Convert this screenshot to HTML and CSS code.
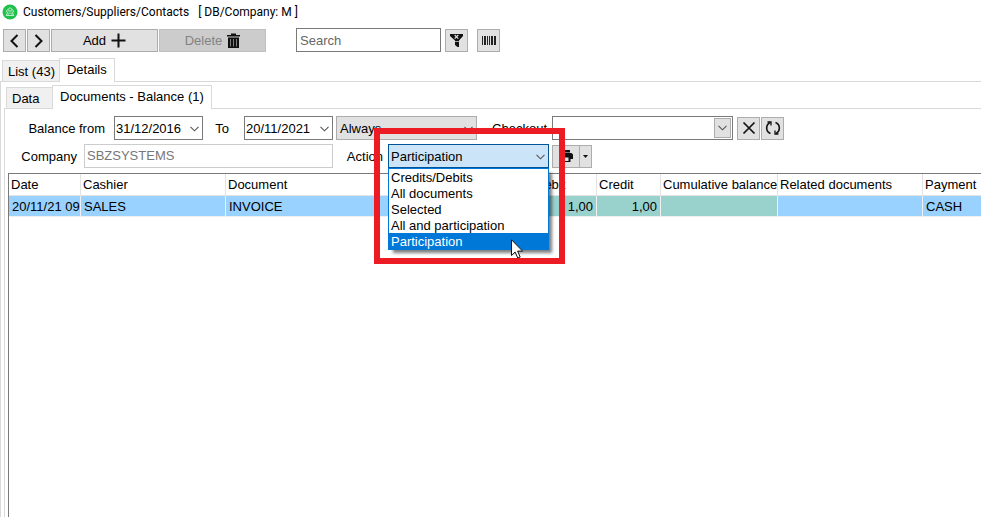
FILE: index.html
```html
<!DOCTYPE html>
<html lang="en">
<head>
<meta charset="utf-8">
<title>Customers/Suppliers/Contacts</title>
<link rel="stylesheet" href="styles.css">
</head>

<body>
<svg class="defs" aria-hidden="true">
	<symbol id="down" viewBox="0 0 9 6"><path d="M.5 .8l4 4 4-4" fill="none" stroke="#555" stroke-width="1.1"/></symbol>
</svg>
<div id="main">
	<div id="titleBar">
		<svg class="logo" width="16" height="16" viewBox="0 0 16 16">
			<circle cx="8" cy="8" r="7.5" fill="#1fc04b"/>
			<g fill="none" stroke="#c9f3d4" stroke-width=".9">
				<circle cx="8" cy="5.5" r="1.6"/>
				<path d="M6.2 7.4L4.2 11.5h7.6L9.8 7.4M6 11.3c0-3 4-3 4 0M5.6 5.2L4 8.4M10.4 5.2L12 8.4"/>
			</g>
		</svg>
		<h1>Customers/Suppliers/Contacts</h1>
		<span>[ DB/Company: M ]</span>
	</div>

	<div id="toolbar">
		<button class="btn" type="button" aria-label="Previous"><svg width="11" height="16" viewBox="0 0 11 16"><path d="M8.5 2L2.5 8l6 6" fill="none" stroke="#111" stroke-width="2"/></svg></button>
		<button class="btn" type="button" aria-label="Next"><svg width="11" height="16" viewBox="0 0 11 16"><path d="M2.5 2l6 6-6 6" fill="none" stroke="#111" stroke-width="2"/></svg></button>
		<button class="btn wide" type="button">Add <svg width="15" height="15" viewBox="0 0 15 15"><path d="M7.5 .5v14M.5 7.5h14" stroke="#111" stroke-width="2"/></svg></button>
		<button class="btn wide" type="button" disabled>Delete <svg width="13" height="15" viewBox="0 0 13 15"><path d="M4 2V.5h5V2h4v1.5H0V2zM1 4.5h11V15H1z" fill="#111"/><path d="M3.5 6v7.500M6.500 6v7.500M9.500 6v7.500" stroke="#999" stroke-width=".8"/></svg></button>
		<input class="search" type="text" placeholder="Search" aria-label="Search">
		<button class="btn" type="button" aria-label="Clear filter"><svg width="13" height="15" viewBox="0 0 13 15"><path d="M0 1h13v2L9 7.500V14H7.500L5 12V7.500L0 3z" fill="#111"/><path d="M4.700 2l3.600 3.600M8.300 2L4.700 5.600" stroke="#e1e1e1" stroke-width="1.200"/><path d="M4.500 8.500h5" stroke="#e1e1e1" stroke-width=".7"/></svg></button>
		<button class="btn barcode" type="button" aria-label="Barcode"><svg width="14" height="9" viewBox="0 0 14 9"><path d="M0 0h1v9H0zM2 0h2v9H2zM5 0h1v9H5zM7 0h1v9H7zM9 0h2v9H9zM12 0h2v9h-2z" fill="#222"/></svg></button>
	</div>

	<div class="tabs">
		<a class="tab" href="#">List (43)</a>
		<a class="tab active" href="#">Details</a>
	</div>
	<div class="page">
		<div class="tabs">
			<a class="tab data" href="#">Data</a>
			<a class="tab active" href="#">Documents - Balance (1)</a>
		</div>
		<div class="page inner">
			<form class="filters">
				<div class="row">
					<label class="first" for="from">Balance from</label>
					<div class="field date"><input id="from" type="text" value="31/12/2016"><svg class="arrow"><use href="#down"/></svg></div>
					<label class="to" for="to">To</label>
					<div class="field date"><input id="to" type="text" value="20/11/2021"><svg class="arrow"><use href="#down"/></svg></div>
					<div class="field period"><select aria-label="Period"><option>Always</option></select><svg class="arrow"><use href="#down"/></svg></div>
					<label class="checkoutLabel" for="checkout">Checkout</label>
					<div class="field checkout"><input id="checkout" type="text"><span class="drop"><svg class="arrow"><use href="#down"/></svg></span></div>
					<button class="btn clearBtn" type="button" aria-label="Clear"><svg width="14" height="14" viewBox="0 0 14 14"><path d="M1.500 1.500l11 11M12.500 1.500l-11 11" stroke="#111" stroke-width="1.700"/></svg></button>
					<button class="btn" type="button" aria-label="Refresh"><svg width="16" height="16" viewBox="0 0 16 16"><path d="M5.500 13.500C.5 11.500.5 5 5 2.500M10.500 2.500c5 2 5 8.500.5 11" fill="none" stroke="#111" stroke-width="1.600"/><path d="M2.500 2H6v3.500M13.500 14H10v-3.500" fill="none" stroke="#111" stroke-width="1.300"/></svg></button>
				</div>
				<div class="row">
					<label class="company" for="company">Company</label>
					<div class="field companyField"><input id="company" type="text" value="SBZSYSTEMS" disabled></div>
					<label class="actionLabel" for="action">Action</label>
					<div class="field action">
						<select id="action">
							<option>Credits/Debits</option>
							<option>All documents</option>
							<option>Selected</option>
							<option>All and participation</option>
							<option selected>Participation</option>
						</select>
						<svg class="arrow"><use href="#down"/></svg>
						<ul class="list">
							<li>Credits/Debits</li>
							<li>All documents</li>
							<li>Selected</li>
							<li>All and participation</li>
							<li class="on">Participation</li>
						</ul>
						<div class="mark"></div>
						<svg class="cursor" width="13" height="20" viewBox="0 0 13 20"><path d="M.5 .8v15.700l3.600-3.500 2.700 6 2.400-1-2.600-5.900h5z" fill="#fff" stroke="#111" stroke-width="1"/></svg>
					</div>
					<button class="btn print" type="button" aria-label="Print"><svg width="14" height="12" viewBox="0 0 14 12"><path d="M3 0h8v2.500H3zM1.500 3h11L14 4.500V9h-2.500v3h-9V9H0V4.500z" fill="#111"/><path d="M4.500 7.500h5V11h-5z" fill="#e1e1e1"/></svg></button>
					<button class="btn more" type="button" aria-label="Print options"><svg width="5" height="3" viewBox="0 0 5 3"><path d="M0 0h5L2.500 3z" fill="#111"/></svg></button>
				</div>
			</form>

			<div class="grid">
				<table>
					<colgroup>
						<col class="cDate"><col class="cName"><col class="cDoc"><col class="cSum"><col class="cSum"><col class="cBalance"><col class="cName"><col>
					</colgroup>
					<thead>
						<tr>
							<th>Date</th>
							<th>Cashier</th>
							<th>Document</th>
							<th>Debit</th>
							<th>Credit</th>
							<th>Cumulative balance</th>
							<th>Related documents</th>
							<th>Payment</th>
						</tr>
					</thead>
					<tbody>
						<tr>
							<td>20/11/21 09</td>
							<td>SALES</td>
							<td>INVOICE</td>
							<td class="num">1,00</td>
							<td class="num">1,00</td>
							<td class="num"></td>
							<td></td>
							<td>CASH</td>
						</tr>
					</tbody>
				</table>
			</div>
		</div>
	</div>
</div>
</body>
</html>
```
FILE: styles.css
```css
/* reset start */
*{ box-sizing:border-box;}
html,body{ height:100%; overflow:hidden;}
body,h1,ul{ margin:0; padding:0;}
body,input,select,button{ font:13px/16px "Liberation Sans",Arial,sans-serif; color:#000;}
body{ background:#fff;}
li{ list-style:none;}
a{ color:#000; text-decoration:none;}
svg{ display:block; flex:none;}
.defs{ position:absolute; width:0; height:0;}
/* reset end */

/* frame start */
#main{ height:100%; display:flex; flex-direction:column;}
#titleBar{ display:flex; align-items:center; height:24px; padding-left:2px; font:12px/16px Roboto,sans-serif;}
#titleBar h1{ font:inherit; margin:0 9px 0 5px;}
#toolbar{ display:flex; align-items:flex-end; height:28px; padding-left:3px; gap:1px;}
/* frame end */

/* button start */
.btn{ display:flex; align-items:center; justify-content:center; gap:5px; flex:none; width:23px; height:23px; padding:0; border:1px solid #adadad; background:#e1e1e1;}
.btn.wide{ width:107px;}
.btn:disabled{ background:#ccc; border-color:#bfbfbf; color:#838383;}
.search{ width:145px; height:24px; margin:0 3px 0 29px; padding:0 3px; border:1px solid #7a7a7a;}
.search::placeholder{ color:#666; opacity:1;}
.barcode{ margin-left:8px;}
/* button end */

/* tabs start */
.tabs{ display:flex; align-items:flex-end; flex:none; height:30px; margin-bottom:-1px; padding-left:2px; position:relative;}
.tab{ height:22px; padding:3px 4px 0 5px; border:1px solid #d9d9d9; border-right:none; background:#f0f0f0; white-space:nowrap;}
.tab.active{ height:24px; padding:3px 7px 0; border-right:1px solid #d9d9d9; border-bottom:none; background:#fff;}
.tab.data{ width:46px;}
.page{ flex:1; display:flex; flex-direction:column; min-height:0; border:1px solid #d9d9d9; border-width:1px 0 0 1px;}
.page .tabs{ height:27px; padding-left:5px;}
.page.inner{ margin-left:3px;}
/* tabs end */

/* filters start */
.filters{ padding:7px 0 1px;}
.row{ display:flex; align-items:center; height:24px; margin-bottom:4px;}
.row label{ flex:none; padding-top:2px; white-space:nowrap; text-align:right;}
.first{ width:100px; margin-right:9px;}
.to{ width:26px; margin-right:15px;}
.checkoutLabel{ width:70px; margin-right:5px;}
.company{ width:72px; margin-right:7px;}
.actionLabel{ width:50px; margin-right:5px;}
.field{ position:relative; flex:none; height:24px;}
.field input,.field select{ width:100%; height:100%; padding:0 1px; border:1px solid #7a7a7a; border-radius:0; background:#fff; appearance:none; outline:none;}
.arrow{ position:absolute; right:4px; top:10px; width:9px; height:6px; pointer-events:none;}
.date{ width:89px;}
.period{ width:141px; margin-left:3px;}
.field.period select{ padding:2px 3px 0; border-color:#adadad; background:#e1e1e1;}
.checkout{ width:181px;}
.drop{ position:absolute; right:2px; top:2px; width:17px; height:20px; border:1px solid #adadad; background:#e1e1e1;}
.drop .arrow{ right:3px; top:6px;}
.clearBtn{ margin:0 1px 0 4px;}
.companyField{ width:249px;}
.field.companyField input{ padding:0 2px 2px; border-color:#ccc; color:#777;}
.action{ width:161px;}
.field.action select{ padding:2px 2px 0; border-color:#005499; background:#cce4f7;}
.print{ width:28px; margin-left:3px;}
.more{ width:13px; margin-left:-1px;}
/* filters end */

/* list start */
.list{ position:absolute; left:0; right:0; top:24px; z-index:2; border:1px solid #0078d7; background:#fff; box-shadow:4px 4px 3px -1px rgba(0,0,0,.5);}
.list li{ padding-left:2px; line-height:18px; height:16px;}
.list .on{ background:#0078d7; color:#fff;}
.mark{ position:absolute; left:-14px; top:-16px; z-index:3; width:191px; height:136px; border:6px solid #ed1c24;}
.cursor{ position:absolute; left:123px; top:95px; z-index:4;}
/* list end */

/* grid start */
.grid{ flex:1; min-height:0; margin-left:3px; border:1px solid #7a7a7a; border-width:1px 0 0 1px; overflow:hidden;}
.grid table{ width:100%; table-layout:fixed; border-collapse:separate; border-spacing:0;}
.grid th,.grid td{ height:22px; padding:1px 0 0 2px; border-right:1px solid #e3e3e3; border-bottom:1px solid #e3e3e3; font-weight:normal; text-align:left; white-space:nowrap; overflow:hidden;}
.grid td{ height:21px; padding:1px 0 0 3px; background:#99d1ff; border-color:#f0f0f0;}
.grid tr :last-child{ border-right:none;}
.grid td.num{ padding-right:3px; background:#99d1cc; text-align:right;}
.cDate{ width:72px;}
.cName{ width:145px;}
.cDoc{ width:307px;}
.cSum{ width:64px;}
.cBalance{ width:117px;}
/* grid end */
```
